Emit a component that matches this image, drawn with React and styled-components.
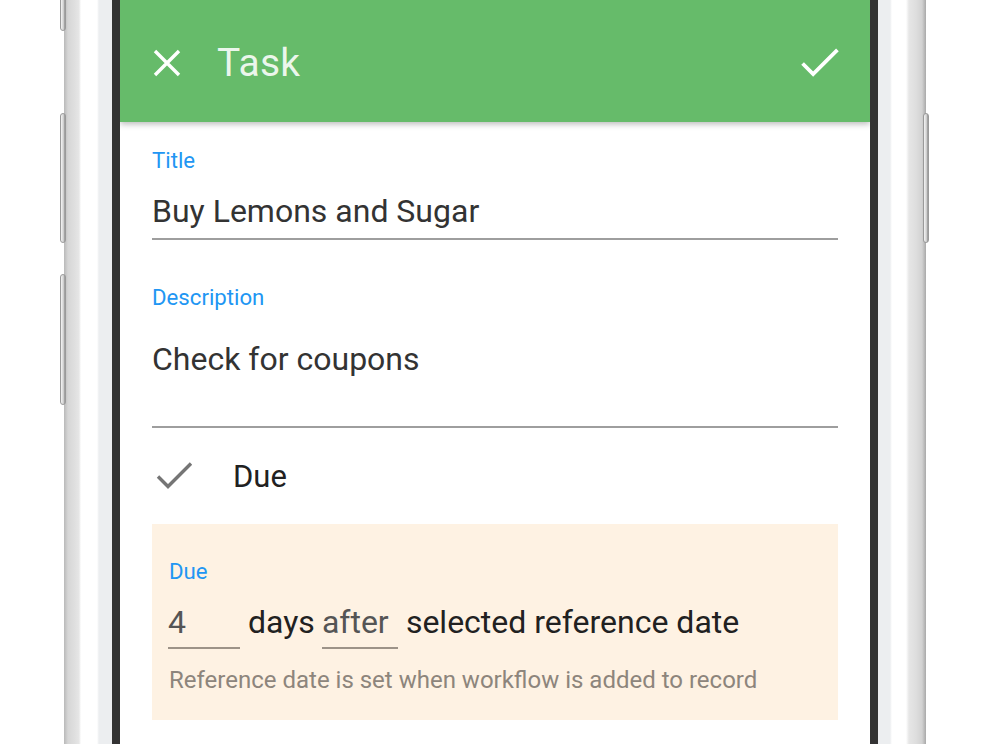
import React from "react";
import styled, { createGlobalStyle } from "styled-components";

const GlobalStyle = createGlobalStyle`
  html, body {
    margin: 0;
    padding: 0;
    background: #ffffff;
    overflow: hidden;
  }
  body {
    font-family: Roboto, "Noto Sans", "Liberation Sans", sans-serif;
  }
`;

function CloseIcon() {
  return (
    <svg width="28" height="28" viewBox="0 0 28 28">
      <path d="M2 2 L26 26 M26 2 L2 26" stroke="#fff" strokeWidth="3.4" fill="none" />
    </svg>
  );
}

function CheckIcon({ color, width, height, stroke }) {
  return (
    <svg width={width} height={height} viewBox="0 0 36 28">
      <polyline points="1.5,14.5 11.5,24.5 34.5,1.5" stroke={color} strokeWidth={stroke} fill="none" />
    </svg>
  );
}

function App() {
  return (
    <>
      <GlobalStyle />
      <Stage>
        <Phone>
          <Rail side="left">
            <SideButton style={{ top: -20, height: 51 }} side="left" />
            <SideButton style={{ top: 113, height: 130 }} side="left" />
            <SideButton style={{ top: 274, height: 131 }} side="left" />
          </Rail>
          <Bezel />
          <Screen>
            <AppBar>
              <BarButton>
                <CloseIcon />
              </BarButton>
              <BarTitle>Task</BarTitle>
              <BarAction>
                <CheckIcon color="#fff" width={38} height={30} stroke={3.6} />
              </BarAction>
            </AppBar>

            <Form>
              <Field>
                <Label>Title</Label>
                <Value>Buy Lemons and Sugar</Value>
              </Field>

              <Field multiline>
                <Label>Description</Label>
                <Value>Check for coupons</Value>
              </Field>

              <ToggleRow>
                <ToggleIcon>
                  <CheckIcon color="#757575" width={37} height={28} stroke={3.4} />
                </ToggleIcon>
                <ToggleText>Due</ToggleText>
              </ToggleRow>

              <DuePanel>
                <Label>Due</Label>
                <Sentence>
                  <InlineInput width={72}>4</InlineInput>
                  <Word>days</Word>
                  <InlineInput width={76}>after</InlineInput>
                  <Word>selected reference date</Word>
                </Sentence>
                <Helper>Reference date is set when workflow is added to record</Helper>
              </DuePanel>
            </Form>
          </Screen>
          <Bezel />
          <Rail side="right">
            <SideButton style={{ top: 113, height: 130 }} side="right" />
          </Rail>
        </Phone>
      </Stage>
    </>
  );
}

const Stage = styled.div`
  width: 990px;
  height: 744px;
  overflow: hidden;
  display: flex;
  padding-left: 64px;
  box-sizing: border-box;
`;

const Phone = styled.div`
  display: flex;
  height: 744px;
`;

const Rail = styled.div`
  position: relative;
  width: 48px;
  height: 100%;
  background: ${(p) =>
    p.side === "left"
      ? "linear-gradient(to right, #b9b9b9 0px, #d6d6d6 4px, #dedede 10px, #e6e6e6 15px, #ffffff 17px, #ffffff 33px, #eceef0 35px, #eceef0 48px)"
      : "linear-gradient(to right, #eceef0 0px, #eceef0 12px, #ffffff 14px, #ffffff 28px, #e6e6e6 31px, #dedede 38px, #d2d2d2 44px, #a9a9a9 48px)"};
`;

const SideButton = styled.div`
  position: absolute;
  ${(p) => (p.side === "left" ? "left: -4px;" : "right: -3px;")}
  width: 6px;
  box-sizing: border-box;
  border-radius: 3px;
  border: 1px solid #9a9a9a;
  background: linear-gradient(to right, #f4f4f4, #d2d2d2 60%, #8e8e8e);
`;

const Bezel = styled.div`
  width: 8px;
  height: 100%;
  background: #333333;
`;

const Screen = styled.div`
  width: 750px;
  height: 100%;
  background: #ffffff;
  display: flex;
  flex-direction: column;
  overflow: hidden;
`;

const AppBar = styled.header`
  position: relative;
  z-index: 1;
  height: 122px;
  flex: none;
  background: #66bb6a;
  display: flex;
  align-items: center;
  padding: 4px 32px 0 33px;
  box-sizing: border-box;
  box-shadow: 0 2px 6px rgba(0, 0, 0, 0.28);
`;

const BarButton = styled.div`
  display: flex;
  align-items: center;
  width: 64px;
  height: 40px;
`;

const BarTitle = styled.h1`
  margin: 0;
  flex: 1;
  font-weight: 400;
  font-size: 39px;
  color: rgba(255, 255, 255, 0.88);
  letter-spacing: 0.3px;
`;

const BarAction = styled.div`
  display: flex;
  align-items: center;
  margin-right: -1px;
`;

const Form = styled.div`
  display: flex;
  flex-direction: column;
  padding: 25px 32px 0;
`;

const Field = styled.div`
  display: flex;
  flex-direction: column;
  border-bottom: 2px solid #9e9e9e;
  padding-bottom: ${(p) => (p.multiline ? "47px" : "7px")};
  margin-bottom: ${(p) => (p.multiline ? "0" : "44px")};

  & > div:last-child {
    margin-top: ${(p) => (p.multiline ? "30px" : "19px")};
  }
`;

const Label = styled.div`
  font-size: 22.2px;
  line-height: 26px;
  color: #2196f3;
`;

const Value = styled.div`
  font-size: 32px;
  line-height: 39px;
  color: #333333;
`;

const ToggleRow = styled.div`
  display: flex;
  align-items: center;
  height: 96px;
`;

const ToggleIcon = styled.div`
  width: 81px;
  padding-left: 4px;
  box-sizing: border-box;
  display: flex;
  align-items: center;
`;

const ToggleText = styled.div`
  font-size: 31px;
  color: #212121;
`;

const DuePanel = styled.div`
  background: #fef2e3;
  height: 196px;
  box-sizing: border-box;
  padding: 34px 17px 0;
  display: flex;
  flex-direction: column;
`;

const Sentence = styled.div`
  display: flex;
  align-items: flex-end;
  gap: 8px;
  margin-top: 18px;
  font-size: 32px;
  line-height: 40px;
`;

const InlineInput = styled.div`
  width: ${(p) => p.width}px;
  color: #555555;
  border-bottom: 2px solid #9d9388;
  padding-bottom: 5px;
  margin-left: -1px;
`;

const Word = styled.div`
  color: #212121;
  padding-bottom: 7px;
`;

const Helper = styled.div`
  margin-top: 18px;
  font-size: 24px;
  line-height: 26px;
  color: #8d857c;
`;

export default App;
